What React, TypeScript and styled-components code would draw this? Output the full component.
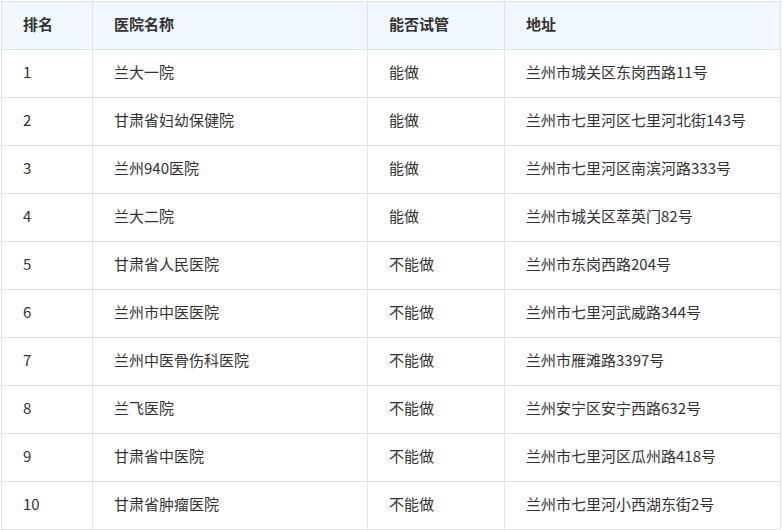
import React from "react";
import styled, { createGlobalStyle } from "styled-components";

const Global = createGlobalStyle`
  html, body { margin: 0; padding: 0; background: #fff; }
  body { font-family: "Microsoft YaHei", "Noto Sans CJK SC", "Noto Sans", sans-serif; }
`;

const Wrap = styled.div`
  padding: 1px 0 0 1px;
`;

const Table = styled.table`
  border-collapse: collapse;
  table-layout: fixed;
  width: 779px;
  font-size: 15px;
  line-height: 20px;
  color: #333;
`;

const Col = styled.col<{ $w: number }>`
  width: ${(p) => p.$w}px;
`;

const HeadCell = styled.th`
  height: 44px;
  padding: 0 0 3px 21px;
  text-align: left;
  font-weight: bold;
  background: #f0f7fe;
  border: 1px solid #e3e3e3;
  color: #333;
`;

const Cell = styled.td`
  height: 44px;
  padding: 0 0 3px 21px;
  border: 1px solid #e3e3e3;
  white-space: nowrap;
`;

const widths = [91, 275, 137, 276];
const headers = ["排名", "医院名称", "能否试管", "地址"];

const rows: [string, string, string, string][] = [
  ["1", "兰大一院", "能做", "兰州市城关区东岗西路11号"],
  ["2", "甘肃省妇幼保健院", "能做", "兰州市七里河区七里河北街143号"],
  ["3", "兰州940医院", "能做", "兰州市七里河区南滨河路333号"],
  ["4", "兰大二院", "能做", "兰州市城关区萃英门82号"],
  ["5", "甘肃省人民医院", "不能做", "兰州市东岗西路204号"],
  ["6", "兰州市中医医院", "不能做", "兰州市七里河武威路344号"],
  ["7", "兰州中医骨伤科医院", "不能做", "兰州市雁滩路3397号"],
  ["8", "兰飞医院", "不能做", "兰州安宁区安宁西路632号"],
  ["9", "甘肃省中医院", "不能做", "兰州市七里河区瓜州路418号"],
  ["10", "甘肃省肿瘤医院", "不能做", "兰州市七里河小西湖东街2号"],
];

export default function App() {
  return (
    <>
      <Global />
      <Wrap>
        <Table>
          <colgroup>
            {widths.map((w, i) => (
              <Col key={i} $w={w} />
            ))}
          </colgroup>
          <thead>
            <tr>
              {headers.map((h) => (
                <HeadCell key={h}>{h}</HeadCell>
              ))}
            </tr>
          </thead>
          <tbody>
            {rows.map((r) => (
              <tr key={r[0]}>
                {r.map((c, i) => (
                  <Cell key={i}>{c}</Cell>
                ))}
              </tr>
            ))}
          </tbody>
        </Table>
      </Wrap>
    </>
  );
}
